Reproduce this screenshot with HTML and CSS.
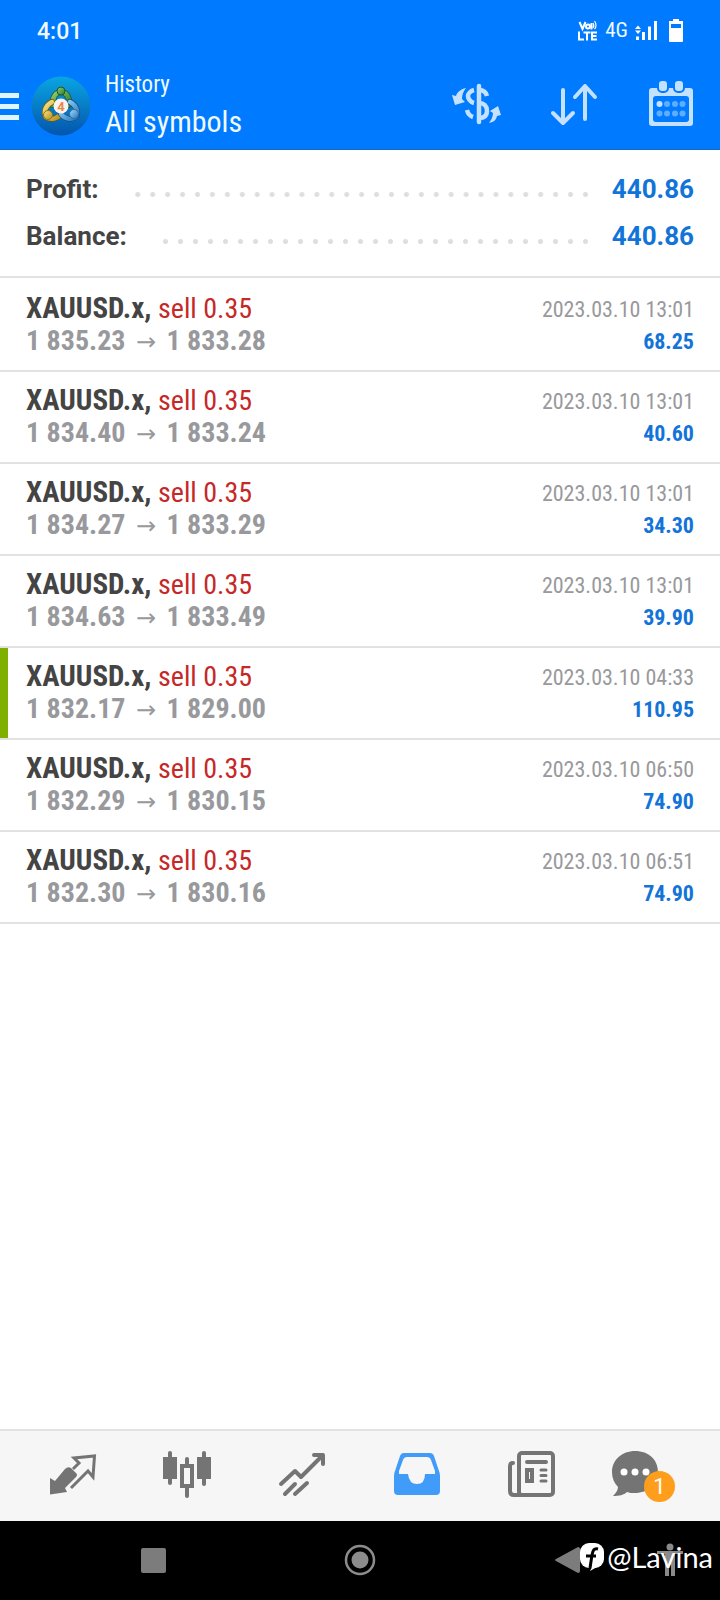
FILE: index.html
```html
<!DOCTYPE html>
<html lang="en">
<head>
<meta charset="utf-8">
<meta name="viewport" content="width=device-width, initial-scale=1">
<title>History</title>
<link rel="stylesheet" href="styles.css">
</head>
<body>
<div class="screen">
  <header class="top">
    <div class="status">
      <span class="clock">4:01</span>
      <div class="status-icons">
        <svg class="volte" width="20" height="22" viewBox="0 0 20 22" role="img" aria-label="VoLTE" fill="none" stroke="#fff" stroke-width="2">
          <path d="M1.500 2l3 7 3-7"/><circle cx="10" cy="6.500" r="2"/><path d="M13.500 3v6.500" /><path d="M15 3c1 1.500 1 3.500 0 5M16.500 1c2 2.500 2 6 0 8" stroke-width="1.200"/>
          <path d="M1 11.500v8h5M5.500 12.500h7M9 12.500v8M19 12.500h-5v7h5M14 16h4.500"/>
        </svg>
        <span class="network">4G</span>
        <svg width="23" height="20" viewBox="0 0 23 20" role="img" aria-label="Signal" fill="#fff">
          <path d="M1 8l3-3.500L7 8zM1 9.500h6L4 13zM2 15.500h3V19H2zM8 11h3v8H8zM14 5.500h3V19h-3zM20 0h3v19h-3z"/>
        </svg>
        <svg class="battery" width="14" height="24" viewBox="0 0 14 24" role="img" aria-label="Battery" fill="#fff">
          <path fill-rule="evenodd" d="M4 0h6v2h4v20q0 1-1 1H1q-1 0-1-1V2h4zM2 5v4h10V5z"/>
        </svg>
      </div>
    </div>
    <div class="bar">
      <button class="menu" aria-label="Menu">
        <svg width="20" height="28" viewBox="0 0 20 28" fill="#dff6ff"><path d="M0 0h19v5H0zM0 11h19v5H0zM0 22h19v5H0z"/></svg>
      </button>
      <svg class="logo" width="60" height="60" viewBox="0 0 60 60" role="img" aria-label="Account">
        <defs>
          <linearGradient id="sky" x1="0" y1="0" x2="0" y2="1"><stop offset="0" stop-color="#0aa5e2"/><stop offset="1" stop-color="#0455ad"/></linearGradient>
          <linearGradient id="grn" x1="0" y1="0" x2="1" y2="1"><stop offset="0" stop-color="#8fd06a"/><stop offset="1" stop-color="#2c7a33"/></linearGradient>
          <linearGradient id="gld" x1="0" y1="0" x2="1" y2="1"><stop offset="0" stop-color="#f5e480"/><stop offset="1" stop-color="#b98f1c"/></linearGradient>
          <linearGradient id="blu" x1="0" y1="0" x2="1" y2="1"><stop offset="0" stop-color="#a5dcf7"/><stop offset="1" stop-color="#2577bd"/></linearGradient>
        </defs>
        <circle cx="30" cy="30" r="29.500" fill="url(#sky)"/>
        <g fill="none" stroke-linecap="round">
          <path d="M22 29c-1-8 3-13 8-13s9 5 8 13" stroke="#23562a" stroke-width="6"/>
          <path d="M22 29c-1-8 3-13 8-13s9 5 8 13" stroke="url(#grn)" stroke-width="4.500"/>
          <path d="M21 26c-6 3-9 9-6 15 5 3 11 2 15-3" stroke="#6f5a14" stroke-width="6"/>
          <path d="M21 26c-6 3-9 9-6 15 5 3 11 2 15-3" stroke="url(#gld)" stroke-width="4.500"/>
          <path d="M39 26c6 3 9 9 6 15-5 3-11 2-15-3" stroke="#174f85" stroke-width="6"/>
          <path d="M39 26c6 3 9 9 6 15-5 3-11 2-15-3" stroke="url(#blu)" stroke-width="4.500"/>
        </g>
        <circle cx="30" cy="15" r="4" fill="url(#grn)" stroke="#23562a"/>
        <circle cx="17" cy="39" r="4.500" fill="url(#gld)" stroke="#8f7418"/>
        <circle cx="43" cy="38" r="4.500" fill="url(#blu)" stroke="#2a6ea8"/>
        <circle cx="30" cy="30" r="7.500" fill="#f7f3ee"/>
        <text x="30" y="35" class="logo-num">4</text>
      </svg>
      <div class="titles">
        <p class="sub">History</p>
        <h1 class="title">All symbols</h1>
      </div>
      <div class="actions">
        <button aria-label="Deals">
          <svg width="50" height="50" viewBox="0 0 50 50" fill="none" stroke="#c4e2ff" stroke-width="4.500">
            <path d="M27 7v36" stroke-linecap="round"/><path d="M35 17c-1-4-4-6-8-6M27 24c5 0 8 3 8 8s-3 7-8 7"/>
            <path d="M22 11c-4 1-6 4-6 6s2 6 6 7M21 38c-3-1-5-3-6-7"/>
            <path d="M14 9C9 10 5 13 4 17l-4-1 3 10 10-3-3-3c0-4 1-7 4-11zM37 44c2-3 4-6 4-10l-3-2 8-5 3 9-4 1c-1 4-3 6-8 7z" fill="#c4e2ff" stroke="none"/>
          </svg>
        </button>
        <button aria-label="Sort">
          <svg width="50" height="50" viewBox="0 0 50 50" fill="none" stroke="#c4e2ff" stroke-width="4" stroke-linecap="round" stroke-linejoin="round">
            <path d="M14 11v33M4 34l10 10 10-10M36 40V7M26 18L36 7l10 11"/>
          </svg>
        </button>
        <button aria-label="Choose period">
          <svg width="50" height="50" viewBox="0 0 50 50">
            <path fill="#c4e2ff" fill-rule="evenodd" d="M6 9h38q3 0 3 3v32q0 3-3 3H6q-3 0-3-3V12q0-3 3-3zM10 17q-3 0-3 3v20q0 3 3 3h30q3 0 3-3V20q0-3-3-3z"/>
            <rect x="12" y="1" width="10" height="12" rx="4" fill="#c4e2ff" stroke="#007aff" stroke-width="2"/>
            <rect x="28" y="1" width="10" height="12" rx="4" fill="#c4e2ff" stroke="#007aff" stroke-width="2"/>
            <circle cx="13.500" cy="25" r="3" fill="#c4e2ff"/>
            <g fill="#5fadff"><circle cx="21" cy="25" r="3"/><circle cx="29" cy="25" r="3"/><circle cx="36.500" cy="25" r="3"/><circle cx="13.500" cy="34.500" r="3"/><circle cx="21" cy="34.500" r="3"/><circle cx="29" cy="34.500" r="3"/><circle cx="36.500" cy="34.500" r="3"/></g>
          </svg>
        </button>
      </div>
    </div>
  </header>

  <main class="content">
    <dl class="summary">
      <div class="sum-row"><dt>Profit:</dt><dd>440.86</dd></div>
      <div class="sum-row"><dt>Balance:</dt><dd>440.86</dd></div>
    </dl>
    <ul class="deals">
      <li class="deal"><div><p class="symbol">XAUUSD.x, <span class="side">sell 0.35</span></p><p class="price">1 835.23 <span class="arrow">→</span> 1 833.28</p></div><div class="right"><p class="date">2023.03.10 13:01</p><p class="gain">68.25</p></div></li>
      <li class="deal"><div><p class="symbol">XAUUSD.x, <span class="side">sell 0.35</span></p><p class="price">1 834.40 <span class="arrow">→</span> 1 833.24</p></div><div class="right"><p class="date">2023.03.10 13:01</p><p class="gain">40.60</p></div></li>
      <li class="deal"><div><p class="symbol">XAUUSD.x, <span class="side">sell 0.35</span></p><p class="price">1 834.27 <span class="arrow">→</span> 1 833.29</p></div><div class="right"><p class="date">2023.03.10 13:01</p><p class="gain">34.30</p></div></li>
      <li class="deal"><div><p class="symbol">XAUUSD.x, <span class="side">sell 0.35</span></p><p class="price">1 834.63 <span class="arrow">→</span> 1 833.49</p></div><div class="right"><p class="date">2023.03.10 13:01</p><p class="gain">39.90</p></div></li>
      <li class="deal marked"><div><p class="symbol">XAUUSD.x, <span class="side">sell 0.35</span></p><p class="price">1 832.17 <span class="arrow">→</span> 1 829.00</p></div><div class="right"><p class="date">2023.03.10 04:33</p><p class="gain">110.95</p></div></li>
      <li class="deal"><div><p class="symbol">XAUUSD.x, <span class="side">sell 0.35</span></p><p class="price">1 832.29 <span class="arrow">→</span> 1 830.15</p></div><div class="right"><p class="date">2023.03.10 06:50</p><p class="gain">74.90</p></div></li>
      <li class="deal"><div><p class="symbol">XAUUSD.x, <span class="side">sell 0.35</span></p><p class="price">1 832.30 <span class="arrow">→</span> 1 830.16</p></div><div class="right"><p class="date">2023.03.10 06:51</p><p class="gain">74.90</p></div></li>
    </ul>
  </main>

  <nav class="tabs" aria-label="Sections">
    <button aria-label="Quotes">
      <svg width="50" height="50" viewBox="0 0 50 50">
        <path d="M3 44.500V28l5 3L18 19q3-3 6-1l5 5q2 2 0 4L18 38l2 4z" fill="#747474"/>
        <path d="M24 38l17-17 5 6 1.500-21L27 8l5 5-6 6" fill="none" stroke="#747474" stroke-width="3"/>
      </svg>
    </button>
    <button aria-label="Charts">
      <svg width="50" height="50" viewBox="0 0 50 50" fill="none" stroke="#747474" stroke-width="4" stroke-linecap="round">
        <path d="M8 3v30M42 3v31M25 9v7M25 36v10"/>
        <path d="M1 7h14v22H1zM35 7h14v22H35z" fill="#747474" stroke="none"/>
        <rect x="20" y="16" width="10" height="20"/>
      </svg>
    </button>
    <button aria-label="Trade">
      <svg width="50" height="50" viewBox="0 0 50 50" fill="none" stroke="#747474" stroke-width="4" stroke-linecap="round" stroke-linejoin="round">
        <path d="M4 34l14-13 6 6L45 6M37 5h9v9M8 44l10-10M18 44l12-11"/>
      </svg>
    </button>
    <button aria-label="History" aria-current="page">
      <svg width="50" height="50" viewBox="0 0 50 50" fill="#419bf9">
        <path fill-rule="evenodd" d="M12 3h26q3 0 4 3l5 15q1 2 1 5v15q0 4-4 4H6q-4 0-4-4V26q0-3 1-5L8 6q1-3 4-3zM15 7q-3 0-4 3L7 21v3h9q1 10 9 10t8-10h10v-3L39 10q-1-3-4-3z"/>
      </svg>
    </button>
    <button aria-label="News">
      <svg width="50" height="50" viewBox="0 0 50 50" fill="none" stroke="#747474" stroke-width="4" stroke-linecap="round">
        <rect x="12" y="3" width="34" height="42" rx="3"/>
        <path d="M6 13q-3 0-3 3v25q0 4 4 4h8M20 12h19"/>
        <path d="M34 20h5M34 25.500h5M34 31h5" stroke-width="3"/><rect x="20" y="20" width="5" height="11"/>
      </svg>
    </button>
    <button class="mail" aria-label="Messages, 1 new">
      <svg width="50" height="50" viewBox="0 0 50 50">
        <path d="M25 1c14 0 23 9 23 21S38 43 25 43c-3 0-6 0-8-1-3 3-8 4-14 4 3-3 5-6 5-9C4 33 2 28 2 22 2 10 12 1 25 1z" fill="#747474"/>
        <g fill="#fff"><circle cx="14" cy="22" r="3.500"/><circle cx="25" cy="22" r="3.500"/><circle cx="36" cy="22" r="3.500"/></g>
      </svg>
      <span class="badge">1</span>
    </button>
  </nav>

  <nav class="system" aria-label="System">
    <button aria-label="Recent apps"><svg width="32" height="32" viewBox="0 0 32 32"><rect x="4" y="4" width="25" height="25" rx="2" fill="#7c7c7c"/></svg></button>
    <button aria-label="Home"><svg width="32" height="32" viewBox="0 0 32 32"><circle cx="16" cy="16" r="14" fill="none" stroke="#8c8c8c" stroke-width="2.500"/><circle cx="16" cy="16" r="8.500" fill="#8c8c8c"/></svg></button>
    <button aria-label="Back"><svg width="32" height="32" viewBox="0 0 32 32"><path d="M27 3q2 0 2 2v22q0 2-2 2L5 17q-2-1 0-2z" fill="#7c7c7c"/></svg></button>
    <button class="access" aria-label="Accessibility"><svg width="28" height="34" viewBox="0 0 28 34" fill="#8a8a8a"><circle cx="14" cy="4" r="3.500"/><path d="M1 8h26v3h-8v22h-4V22h-2v11H9V11H1z"/></svg></button>
    <div class="watermark">
      <svg width="26" height="28" viewBox="0 0 26 28"><rect x="1" y="0" width="24" height="25" rx="9" fill="#fff"/><path d="M11 28l2-4h5z" fill="#fff"/><path d="M19 6c-4-1-5 1-6 6l-2 13M7 13h10" fill="none" stroke="#000" stroke-width="3"/></svg>
      <span>@Lavina</span>
    </div>
  </nav>
</div>
</body>
</html>
```
FILE: styles.css
```css
* { box-sizing: border-box; }
body { margin: 0; background: #fff; font-family: "Roboto Condensed", "Roboto", sans-serif; }
p, h1, ul, dl, dd { margin: 0; padding: 0; }
button { border: 0; padding: 0; background: none; font: inherit; display: block; }
svg { display: block; }
.screen { min-height: 100vh; display: flex; flex-direction: column; }

.top { background: #007aff; color: #eefaff; border-bottom: 1px solid #1a67c4; }
.status { display: flex; align-items: center; justify-content: space-between; height: 62px; padding: 0 37px; font-family: "Roboto", sans-serif; }
.clock { font-size: 23px; font-weight: 500; }
.status-icons { display: flex; align-items: center; }
.network { font-size: 21px; line-height: 24px; padding-bottom: 2px; font-family: "Roboto Condensed", "Roboto", sans-serif; margin: 0 6px 0 7px; }
.battery { margin-left: 12px; }
.bar { display: flex; align-items: center; height: 87px; padding-right: 24px; }
.menu { width: 31px; padding-top: 2px; }
.logo-num { font-family: "Roboto", sans-serif; font-size: 13px; font-weight: 700; fill: #e8854a; text-anchor: middle; }
.titles { flex: 1; padding: 0 0 2px 14px; }
.sub { font-size: 23px; line-height: 34px; }
.title { font-size: 30px; line-height: 40px; font-weight: 400; }
.actions { display: flex; gap: 47px; padding-bottom: 3px; }

.content { flex: 1; }
.summary { padding: 16px 26px; border-bottom: 2px solid #e2e2e2; font-family: "Roboto", sans-serif; font-size: 26px; line-height: 47px; }
.sum-row { display: flex; align-items: center; justify-content: space-between; }
.sum-row::before { content: ""; order: 1; flex: 1; height: 5px; margin: 9px 19px 0 31px; background: radial-gradient(circle, #dedede 2px, transparent 3px) right / 15px 5px round; }
.sum-row dt { font-weight: 700; color: #444; }
.sum-row dd { order: 2; font-weight: 700; color: #1274d8; }

.deals { list-style: none; }
.deal { display: flex; justify-content: space-between; height: 92px; padding: 12px 26px 0; border-bottom: 2px solid #e2e2e2; }
.deal:first-child { height: 94px; padding-top: 14px; }
.marked { box-shadow: inset 8px 0 #7fb000; }
.symbol, .price { font-size: 29px; line-height: 33px; font-weight: 700; color: #444; }
.symbol .side { font-size: 28px; font-weight: 400; color: #c62828; }
.price { font-size: 28px; line-height: 32px; color: #98999c; }
.arrow { font-family: "Noto Sans", "DejaVu Sans", sans-serif; font-size: 24px; line-height: 24px; font-weight: 400; margin: 0 4px; }
.right { text-align: right; padding-top: 2px; }
.date, .gain { font-size: 22px; line-height: 32px; }
.date { color: #98999c; }
.gain { font-weight: 700; color: #1274d8; }

.tabs { display: grid; grid-template-columns: repeat(6, 1fr); height: 92px; padding: 0 16px 2px 14px; background: #f6f6f6; border-top: 2px solid #e2e2e2; }
.tabs button { display: flex; justify-content: center; align-items: center; position: relative; }
.tabs .mail { padding-right: 23px; }
.badge { position: absolute; left: 55px; top: 40px; width: 31px; height: 31px; border-radius: 50%; background: #ff9d1c; color: #fff; font-family: "Roboto", sans-serif; font-size: 22px; line-height: 31px; text-align: center; }

.system { position: relative; display: grid; grid-template-columns: repeat(3, 1fr); align-items: center; justify-items: center; height: 79px; padding: 0 50px 2px; background: #000; }
.access { position: absolute; right: 36px; top: 22px; }
.watermark { position: absolute; right: 7px; top: 18px; display: flex; align-items: center; gap: 2px; color: #fff; font-family: "Lato", sans-serif; font-size: 29px; line-height: 36px; }
```
